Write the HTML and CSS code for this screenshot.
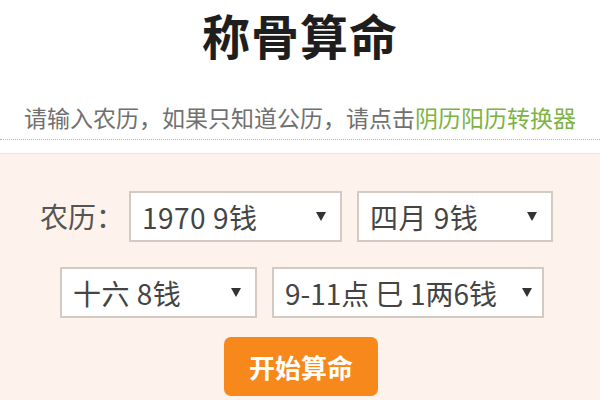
FILE: index.html
```html
<!DOCTYPE html>
<html lang="zh-CN">
<head>
<meta charset="utf-8">
<title>称骨算命</title>
<link rel="stylesheet" href="styles.css">
</head>
<body>
<div class="page">
  <header class="intro">
    <h1 class="title">称骨算命</h1>
    <p class="tip">请输入农历，如果只知道公历，请点击<a class="tip-link" href="#">阴历阳历转换器</a></p>
  </header>
  <section class="panel">
    <div class="row row-first">
      <span class="label">农历：</span>
      <div class="select sel-year"><span class="sel-text">1970 9钱</span><svg class="arrow" viewBox="0 0 10 9"><path d="M0 0H10L5 9Z"/></svg></div>
      <div class="select sel-month"><span class="sel-text">四月 9钱</span><svg class="arrow" viewBox="0 0 10 9"><path d="M0 0H10L5 9Z"/></svg></div>
    </div>
    <div class="row row-second">
      <div class="select sel-day"><span class="sel-text">十六 8钱</span><svg class="arrow" viewBox="0 0 10 9"><path d="M0 0H10L5 9Z"/></svg></div>
      <div class="select sel-hour"><span class="sel-text">9-11点 巳 1两6钱</span><svg class="arrow" viewBox="0 0 10 9"><path d="M0 0H10L5 9Z"/></svg></div>
    </div>
    <div class="actions">
      <button class="btn" type="button">开始算命</button>
    </div>
  </section>
</div>
</body>
</html>
```
FILE: styles.css
```css
* { box-sizing: border-box; }
html, body {
  margin: 0;
  padding: 0;
  background: #ffffff;
}
body {
  font-family: "Noto Sans CJK SC", "Noto Sans", "Liberation Sans", sans-serif;
  width: 600px;
  height: 400px;
  overflow: hidden;
}
.intro {
  border-bottom: 1px dotted #b5b5b5;
  padding-bottom: 7px;
}
.title {
  margin: 0;
  text-align: center;
  font-size: 48px;
  line-height: 68px;
  font-weight: 700;
  color: #1e1e1e;
  letter-spacing: 1px;
}
.tip {
  margin: 34px 0 0;
  text-align: center;
  font-size: 23px;
  line-height: 30px;
  color: #707070;
  white-space: nowrap;
}
.tip-link {
  color: #7cb342;
  text-decoration: none;
}
.panel {
  margin-top: 13px;
  background: #fdf3ec;
  border-top: 1px solid #f6e2d8;
  padding-top: 37px;
  height: 260px;
}
.row {
  display: flex;
  justify-content: center;
  align-items: center;
  gap: 15px;
}
.row-first { padding-right: 7px; }
.row-second { margin-top: 25px; padding-left: 4px; }
.label {
  font-size: 28px;
  color: #555555;
  width: 84px;
  margin-right: -10px;
  line-height: 51px;
}
.select {
  height: 51px;
  background: #ffffff;
  border: 2px solid #d2cbc4;
  display: flex;
  align-items: center;
  justify-content: space-between;
  padding: 0 14px 0 11px;
}
.sel-text {
  font-size: 28px;
  color: #444444;
  white-space: nowrap;
  letter-spacing: 0.5px;
}
.arrow {
  width: 10px;
  height: 9px;
  fill: #333333;
  flex: none;
}
.sel-year { width: 213px; }
.sel-month { width: 196px; }
.sel-day { width: 197px; }
.sel-hour { width: 272px; padding-right: 10px; }
.sel-hour .sel-text { letter-spacing: 0; }
.actions {
  display: flex;
  justify-content: center;
  margin-top: 19px;
  padding-left: 2px;
}
.btn {
  width: 154px;
  height: 59px;
  border: none;
  border-radius: 7px;
  background: #f7891c;
  color: #ffffff;
  font-family: "Noto Sans CJK SC", "Noto Sans", sans-serif;
  font-size: 26px;
  font-weight: 700;
  padding: 0;
}
```
